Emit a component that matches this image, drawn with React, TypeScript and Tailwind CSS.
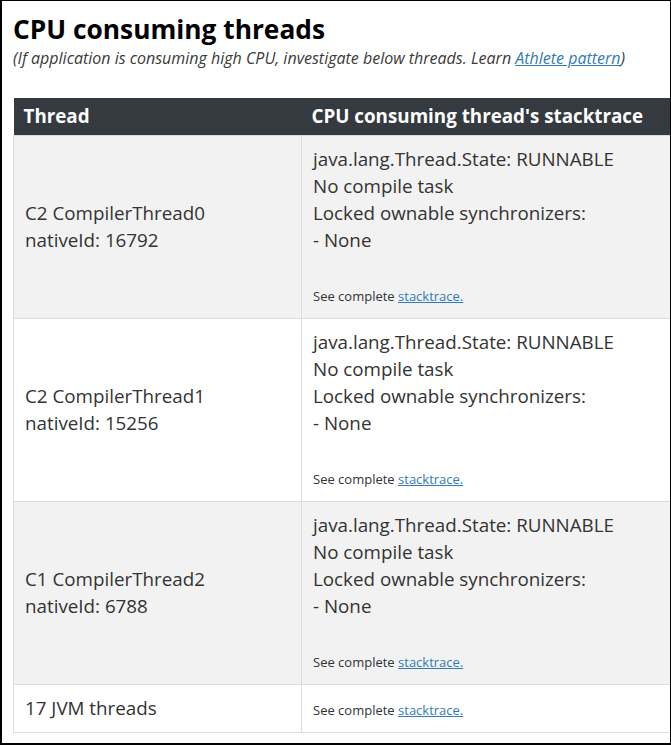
import React from "react";

const rows = [
  { name: "C2 CompilerThread0", id: "16792", bg: "bg-[#f2f2f2]" },
  { name: "C2 CompilerThread1", id: "15256", bg: "bg-white" },
  { name: "C1 CompilerThread2", id: "6788", bg: "bg-[#f2f2f2]" },
];

function SeeComplete() {
  return (
    <span className="text-[13px] leading-none">
      See complete{" "}
      <a href="#" className="text-[#337ab7] underline">
        stacktrace.
      </a>
    </span>
  );
}

export default function App() {
  return (
    <div
      className="w-[671px] h-[745px] overflow-hidden bg-white border-l-2 border-t border-r border-b-2 border-black text-[#333]"
      style={{ fontFamily: '"Open Sans", "Noto Sans", sans-serif' }}
    >
      <div className="pl-[11px] pt-[13px]">
        <h1 className="text-[26.3px] font-bold leading-[31px] text-black">CPU consuming threads</h1>
        <p className="text-[16px] italic leading-[22px] text-[#3a3a3a] mt-[2px]">
          (If application is consuming high CPU, investigate below threads. Learn{" "}
          <a href="#" className="text-[#337ab7] underline">
            Athlete pattern
          </a>
          )
        </p>
        <table className="mt-[29px] w-[700px] border-collapse text-[18.8px] leading-[27px]">
          <thead>
            <tr className="bg-[#343a40] text-white">
              <th className="w-[288px] text-left font-bold px-[10px] py-[5px] border-0">Thread</th>
              <th className="text-left font-bold px-[10px] py-[5px] border-0">
                CPU consuming thread's stacktrace
              </th>
            </tr>
          </thead>
          <tbody>
            {rows.map((r) => (
              <tr key={r.name} className={r.bg}>
                <td className="align-middle px-[11px] py-[10px] border border-[#dddddd]">
                  <div>{r.name}</div>
                  <div>nativeId: {r.id}</div>
                </td>
                <td className="align-top px-[11px] py-[10px] border border-[#dddddd]">
                  <div>java.lang.Thread.State: RUNNABLE</div>
                  <div>No compile task</div>
                  <div>Locked ownable synchronizers:</div>
                  <div>- None</div>
                  <div className="h-[27px]"></div>
                  <div className="h-[27px]">
                    <SeeComplete />
                  </div>
                </td>
              </tr>
            ))}
            <tr className="bg-white">
              <td className="align-middle px-[11px] py-[10px] border border-[#dddddd]">
                <div className="h-[27px]">17 JVM threads</div>
              </td>
              <td className="align-middle px-[11px] py-[10px] border border-[#dddddd]">
                <div className="h-[27px]">
                  <SeeComplete />
                </div>
              </td>
            </tr>
          </tbody>
        </table>
      </div>
    </div>
  );
}
